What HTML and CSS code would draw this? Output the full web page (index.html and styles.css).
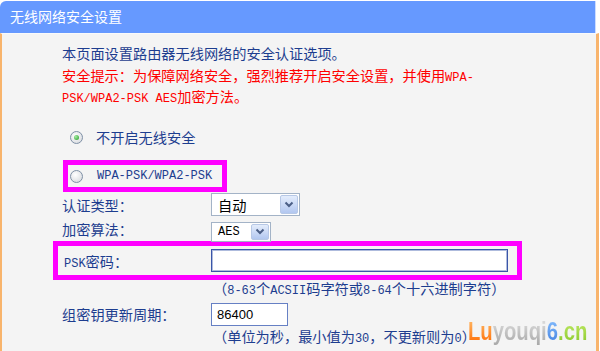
FILE: index.html
```html
<!DOCTYPE html>
<html lang="zh-CN">
<head>
    <meta charset="UTF-8">
    <title>无线网络安全设置</title>
    <link rel="stylesheet" href="styles.css">
</head>
<body>
    <div class="panel">
        <div class="title">无线网络安全设置</div>
        <div class="content">
            <p class="intro">本页面设置路由器无线网络的安全认证选项。</p>
            <p class="warn">安全提示：为保障网络安全，强烈推荐开启安全设置，并使用<span class="en">WPA-</span><br><span class="en">PSK/WPA2-PSK AES</span>加密方法。</p>

            <div class="radio-row first">
                <span class="radio checked"></span>
                <span>不开启无线安全</span>
            </div>
            <div class="radio-row mark">
                <span class="radio"></span>
                <span class="en">WPA-PSK/WPA2-PSK</span>
            </div>

            <div class="row">
                <label>认证类型：</label>
                <div class="select wide">
                    <span>自动</span>
                    <span class="arrow"><svg width="10" height="7" viewBox="0 0 10 7"><path d="M1.5 1.5 L5 5 L8.5 1.5" fill="none" stroke="#4b5f86" stroke-width="2"/></svg></span>
                </div>
            </div>
            <div class="row algo">
                <label>加密算法：</label>
                <div class="select narrow">
                    <span class="en">AES</span>
                    <span class="arrow"><svg width="10" height="7" viewBox="0 0 10 7"><path d="M1.5 1.5 L5 5 L8.5 1.5" fill="none" stroke="#4b5f86" stroke-width="2"/></svg></span>
                </div>
            </div>
            <div class="row psk">
                <label><span class="en">PSK</span>密码：</label>
                <div class="input long"></div>
            </div>
            <p class="hint">（<span class="en">8-63</span>个<span class="en">ACSII</span>码字符或<span class="en">8-64</span>个十六进制字符）</p>

            <div class="row period">
                <label>组密钥更新周期：</label>
                <div class="input short">86400</div>
            </div>
            <p class="hint last">（单位为秒，最小值为<span class="en">30</span>，不更新则为<span class="en">0</span>）</p>
        </div>
        <!-- site watermark over the corner -->
        <div class="watermark"><span class="wm-orange">Lu</span><span class="wm-gray">youqi</span><span class="wm-blue">6</span><span class="wm-green">.cn</span></div>
    </div>
</body>
</html>
```
FILE: styles.css
```css
body {
    margin: 0;
    background: #fff;
    font-family: "Noto Sans CJK SC", sans-serif;
    font-size: 14.2px;
    color: #1d3d8f;
    overflow: hidden;
}

.panel {
    position: relative;
    width: 599px;
    margin-top: 1px;
}

.title {
    width: 596px;
    height: 32px;
    line-height: 30px;
    box-sizing: border-box;
    padding-left: 10px;
    background: #6699ff;
    color: #fff;
    font-size: 14px;
    border-top-left-radius: 6px;
    border-right: 1px solid #cddcff;
}

.content {
    width: 599px;
    box-sizing: border-box;
    background: #f4f4f4;
    border-top: 1px solid #fafafa;
    border-left: 2px solid #f8b46c;
    border-right: 3px solid #f8b46c;
    padding: 9px 0 40px 60px;
}

/* half-width latin text, kept from growing the line box */
.en {
    font-family: "Liberation Mono", monospace;
    font-size: 12px;
    line-height: 1;
}

.intro, .warn {
    margin: 0;
    line-height: 21.5px;
}

.warn {
    color: #f00;
}

/* radio options */
.radio-row {
    display: flex;
    align-items: center;
    gap: 13px;
    height: 22px;
}

.radio-row.first {
    margin-top: 18.5px;
    padding-left: 8px;
}

.radio-row.mark {
    margin-top: 12px;
    margin-left: 1px;
    width: 164px;
    height: 32px;
    box-sizing: border-box;
    border: 5px solid #f0f;
    padding-left: 2px;
    gap: 14px;
}

.radio {
    width: 13px;
    height: 13px;
    box-sizing: border-box;
    border-radius: 50%;
    border: 1px solid #7f90a6;
    background: radial-gradient(circle at 40% 35%, #fff, #d2d5da);
    display: grid;
    place-items: center;
}

.radio.checked::after {
    content: "";
    width: 5px;
    height: 5px;
    border-radius: 50%;
    background: radial-gradient(circle at 35% 35%, #a5eca5, #229a22);
}

/* form rows */
.row {
    display: flex;
    align-items: center;
    height: 25px;
}

.row label {
    width: 149px;
    flex: none;
}

.row.algo {
    height: 24px;
}

.row.algo .select {
    margin-top: 5px;
}

.row.psk {
    margin-left: -9px;
    width: 469px;
    height: 39px;
    box-sizing: border-box;
    border: 5px solid #f0f;
    padding-left: 6px;
}

.row.psk label {
    width: 147px;
}

.row.period {
    margin-top: 5px;
    height: 24px;
}

.select {
    display: flex;
    align-items: stretch;
    justify-content: space-between;
    box-sizing: border-box;
    border: 1px solid #a3b3c7;
    background: #fff;
    padding: 1px 1px 1px 6px;
    color: #000;
}

.select span:first-child {
    align-self: center;
}

.select.wide {
    width: 89px;
    height: 23px;
}

.select.narrow {
    width: 60px;
    height: 20px;
}

.arrow {
    width: 18px;
    box-sizing: border-box;
    border: 1px solid #b7c8e6;
    border-radius: 2px;
    background: linear-gradient(#e4edfc, #b2c7f0);
    display: grid;
    place-items: center;
}

.input {
    height: 23px;
    box-sizing: border-box;
    background: #fff;
    color: #000;
}

.input.long {
    width: 297px;
    border: 1px solid #3a55a8;
    box-shadow: inset 0 0 0 1px #aebbdd;
}

.input.short {
    width: 77px;
    border: 1px solid #6680c4;
    padding-left: 5px;
    font-family: "Liberation Sans", sans-serif;
    font-size: 13px;
    line-height: 21px;
}

.hint {
    margin: 0 0 0 151px;
    line-height: 16px;
}

.hint.last {
    line-height: 20px;
}

.watermark {
    position: absolute;
    left: 468px;
    top: 318px;
    font-family: "Liberation Sans", sans-serif;
    font-weight: bold;
    font-size: 25px;
    line-height: 25px;
    white-space: nowrap;
    transform: scaleX(0.81);
    transform-origin: left top;
}

.watermark span {
    -webkit-background-clip: text;
    background-clip: text;
    color: transparent;
}

.wm-orange {
    background: linear-gradient(#ffc070, #ff6a00);
}

.wm-gray {
    background: linear-gradient(#e2e2e2, #a8a8a8);
}

.wm-blue {
    background: linear-gradient(#8cc2ff, #3f7fe0);
}

.wm-green {
    background: linear-gradient(#c8ee70, #88c828);
}
```
